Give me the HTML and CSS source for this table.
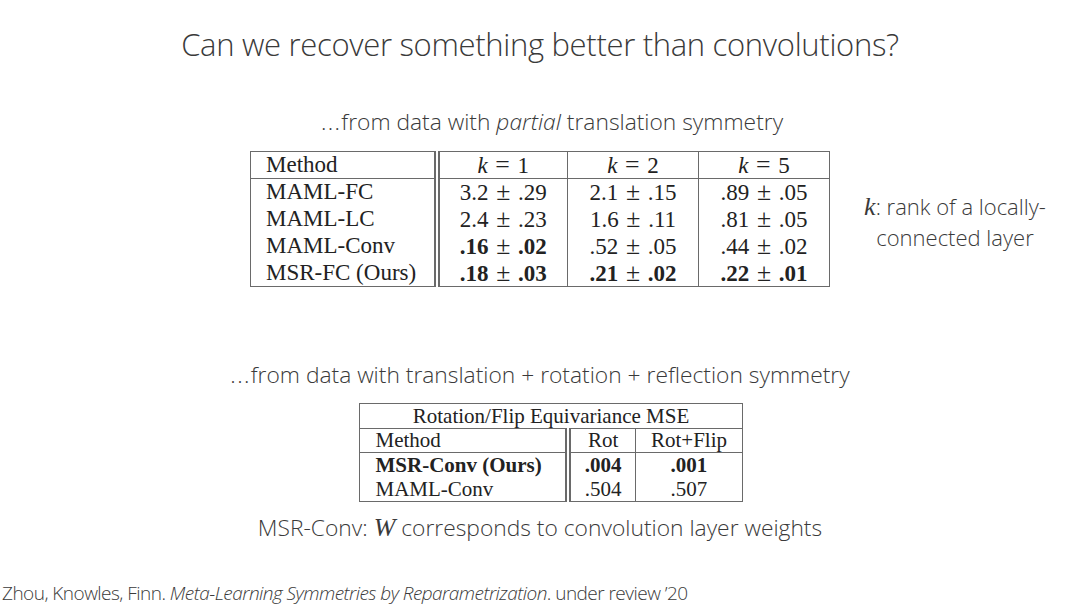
FILE: index.html
```html
<!DOCTYPE html>
<html lang="en">
<head>
  <meta charset="UTF-8" />
  <title>Can we recover something better than convolutions?</title>
  <link rel="stylesheet" href="styles.css">
</head>
<body>

  <div class="slide">
    <h1 class="slide-title">Can we recover something better than convolutions?</h1>

    <!-- ==== PARTIAL TRANSLATION SYMMETRY ==== -->
    <p class="subtitle subtitle-first"><span class="dots">...</span>from data with <em>partial</em> translation symmetry</p>

    <div class="table-row">
      <div></div>
      <table class="results results-k">
        <colgroup>
          <col class="col-method">
          <col class="col-k">
          <col class="col-k">
          <col class="col-k">
        </colgroup>
        <thead>
          <tr>
            <th class="method">Method</th>
            <th class="split"><i>k</i><span class="op">=</span>1</th>
            <th><i>k</i><span class="op">=</span>2</th>
            <th><i>k</i><span class="op">=</span>5</th>
          </tr>
        </thead>
        <tbody>
          <tr>
            <td class="method">MAML-FC</td>
            <td class="split">3.2<span class="op">±</span>.29</td>
            <td>2.1<span class="op">±</span>.15</td>
            <td>.89<span class="op">±</span>.05</td>
          </tr>
          <tr>
            <td class="method">MAML-LC</td>
            <td class="split">2.4<span class="op">±</span>.23</td>
            <td>1.6<span class="op">±</span>.11</td>
            <td>.81<span class="op">±</span>.05</td>
          </tr>
          <tr>
            <td class="method">MAML-Conv</td>
            <td class="split"><b>.16</b><span class="op">±</span><b>.02</b></td>
            <td>.52<span class="op">±</span>.05</td>
            <td>.44<span class="op">±</span>.02</td>
          </tr>
          <tr>
            <td class="method">MSR-FC (Ours)</td>
            <td class="split"><b>.18</b><span class="op">±</span><b>.03</b></td>
            <td><b>.21</b><span class="op">±</span><b>.02</b></td>
            <td><b>.22</b><span class="op">±</span><b>.01</b></td>
          </tr>
        </tbody>
      </table>
      <p class="side-note"><i class="math">k</i>: rank of a locally-<br>connected layer</p>
    </div>

    <!-- ==== FULL SYMMETRY ==== -->
    <p class="subtitle subtitle-second"><span class="dots">...</span>from data with translation + rotation + reflection symmetry</p>

    <table class="results results-rot">
      <colgroup>
        <col class="col-method2">
        <col class="col-rot">
        <col class="col-flip">
      </colgroup>
      <thead>
        <tr>
          <th colspan="3" class="caption-row">Rotation/Flip Equivariance MSE</th>
        </tr>
        <tr>
          <th class="method">Method</th>
          <th class="split">Rot</th>
          <th>Rot+Flip</th>
        </tr>
      </thead>
      <tbody>
        <tr>
          <td class="method"><b>MSR-Conv (Ours)</b></td>
          <td class="split"><b>.004</b></td>
          <td><b>.001</b></td>
        </tr>
        <tr>
          <td class="method">MAML-Conv</td>
          <td class="split">.504</td>
          <td>.507</td>
        </tr>
      </tbody>
    </table>

    <p class="subtitle caption">MSR-Conv: <i class="math">W</i> corresponds to convolution layer weights</p>

    <p class="citation">Zhou, Knowles, Finn. <em>Meta-Learning Symmetries by Reparametrization</em>. under review &rsquo;20</p>
  </div>

</body>
</html>
```

FILE: styles.css
```css
/* Reset */
* {
  margin: 0;
  padding: 0;
  box-sizing: border-box;
}

html, body {
  width: 1080px;
  height: 608px;
  overflow: hidden;
  background: #ffffff;
  color: #3a3a3a;
  font-family: 'Open Sans', 'Noto Sans', sans-serif;
}

/* Slide column */
.slide {
  display: flex;
  flex-direction: column;
  align-items: center;
  width: 1080px;
  height: 608px;
}

.slide-title {
  margin-top: 26px;
  font-weight: 300;
  font-size: 31px;
  line-height: 36px;
  letter-spacing: -0.01em;
}

.subtitle {
  font-weight: 300;
  font-size: 22.8px;
  line-height: 28px;
}

.subtitle em {
  font-style: italic;
}

/* wide LaTeX-style ellipsis */
.dots {
  letter-spacing: 0.06em;
}

.subtitle-first {
  margin-top: 46px;
  padding-left: 24px;
}

.subtitle-second {
  margin-top: 74px;
}

/* Table 1 with the side note on its right */
.table-row {
  display: grid;
  grid-template-columns: 1fr auto 1fr;
  align-items: center;
  width: 100%;
  margin-top: 15px;
}

.side-note {
  text-align: center;
  font-weight: 300;
  font-size: 22px;
  line-height: 30px;
  padding-top: 4px;
}

.math {
  font-family: 'Liberation Serif', 'DejaVu Serif', serif;
  font-style: italic;
  font-size: 26px;
}

/* LaTeX-like tables */
.results {
  border-collapse: collapse;
  table-layout: fixed;
  font-family: 'Liberation Serif', 'Times New Roman', serif;
  color: #222222;
  border: 1.5px solid #6a6a6a;
}

.results th,
.results td {
  font-weight: normal;
  text-align: center;
  white-space: nowrap;
  padding: 0 6px;
}

.results th.method,
.results td.method {
  text-align: left;
  padding-left: 15px;
}

.results .split {
  border-left: 6px double #6a6a6a;
}

.results td:not(.method):not(.split),
.results th:not(.method):not(.split):not(.caption-row) {
  border-left: 1.5px solid #6a6a6a;
}

.results b {
  font-weight: bold;
}

/* math operators get LaTeX spacing */
.op {
  font-size: 1.12em;
  line-height: 1;
  margin: 0 0.3em;
}

.results-k {
  width: 579px;
  font-size: 23px;
}

.results-k .col-method { width: 186px; }
.results-k .col-k { width: 131px; }

.results-k thead th {
  height: 27px;
  line-height: 24px;
  border-bottom: 1.5px solid #6a6a6a;
}

.results-k tbody td {
  height: 27px;
  line-height: 24px;
}

.results-rot {
  width: 382px;
  margin-top: 14px;
  margin-left: 22px;
  font-size: 21px;
}

.results-rot .col-method2 { width: 208px; }
.results-rot .col-rot { width: 68px; }
.results-rot .col-flip { width: 106px; }

.results-rot th,
.results-rot td {
  height: 24.5px;
  line-height: 22px;
}

.results-rot thead th {
  border-bottom: 1.5px solid #6a6a6a;
}

/* Caption and reference */
.caption {
  margin-top: 12px;
}

.citation {
  align-self: flex-start;
  margin-top: 37px;
  padding-left: 2px;
  font-weight: 300;
  font-size: 19px;
  line-height: 28px;
  letter-spacing: -0.028em;
}

.citation em {
  font-style: italic;
}
```
